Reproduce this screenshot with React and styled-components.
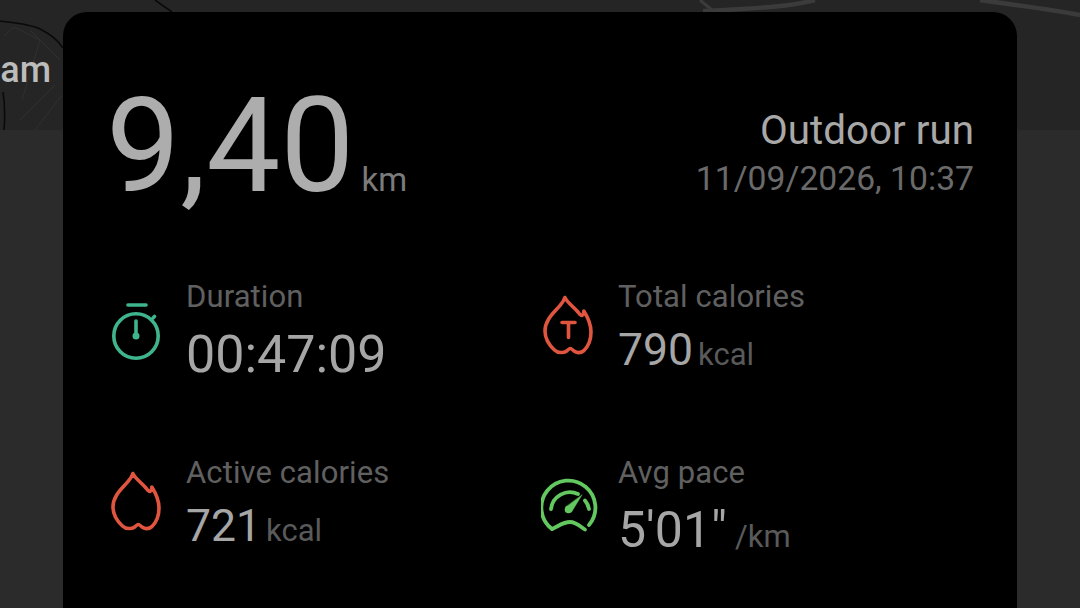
import React from "react";
import styled, { createGlobalStyle } from "styled-components";

const GlobalStyle = createGlobalStyle`
  html, body {
    margin: 0;
    padding: 0;
    background: #2b2b2b;
    overflow: hidden;
  }
  body {
    font-family: Roboto, "Liberation Sans", sans-serif;
  }
`;

const Screen = styled.div`
  position: relative;
  width: 1080px;
  height: 608px;
  overflow: hidden;
  background: #2b2b2b;
`;

const MapStrip = styled.div`
  position: absolute;
  left: 0;
  top: 0;
  width: 1080px;
  height: 130px;
  background: #252525;
`;

const MapLines = styled.svg`
  position: absolute;
  left: 0;
  top: 0;
`;

const MapLabel = styled.span`
  position: absolute;
  right: calc(100% - 51px);
  top: 49px;
  font-size: 36px;
  line-height: 42px;
  font-weight: 500;
  color: #bcbcbc;
`;

const Card = styled.main`
  position: relative;
  box-sizing: border-box;
  width: 954px;
  height: 640px;
  margin: 12px 0 0 63px;
  padding: 68px 43px 0 45px;
  background: #000;
  border-radius: 24px;
`;

const Header = styled.header`
  display: flex;
  justify-content: space-between;
  align-items: flex-start;
`;

const Distance = styled.div`
  display: flex;
  align-items: baseline;
  gap: 7px;
  margin-left: -2px;
  color: #adadad;
`;

const DistanceValue = styled.span`
  font-size: 132px;
  line-height: 132px;
`;

const DistanceUnit = styled.span`
  font-size: 33px;
  color: #7b7b7b;
`;

const Activity = styled.div`
  display: flex;
  flex-direction: column;
  align-items: flex-end;
  padding-top: 28px;
`;

const ActivityName = styled.span`
  font-size: 40.400px;
  line-height: 46px;
  color: #a8a8a8;
`;

const ActivityDate = styled.span`
  font-size: 33.700px;
  line-height: 50px;
  color: #6a6a6a;
`;

const Stats = styled.section`
  display: grid;
  grid-template-columns: 432px 1fr;
  grid-auto-rows: 176px;
  margin-top: 68px;
`;

const Stat = styled.div`
  display: flex;
  align-items: flex-start;
`;

const IconSlot = styled.div`
  flex: none;
  width: 78px;
  margin-top: 15px;
  color: ${(p) => p.$color};

  svg {
    display: block;
    margin-left: 1px;
  }
`;

const StatText = styled.div`
  display: flex;
  flex-direction: column;
`;

const StatLabel = styled.span`
  font-size: 31px;
  line-height: 34px;
  letter-spacing: 0.1px;
  color: #606060;
`;

const StatValue = styled.div`
  display: flex;
  align-items: baseline;
  gap: ${(p) => p.$gap}px;
  margin-top: 12px;
`;

const Figure = styled.span`
  font-size: ${(p) => p.$size}px;
  line-height: ${(p) => (p.$size > 46 ? 57 : 48)}px;
  color: #a6a6a6;
`;

const Unit = styled.span`
  font-size: 31px;
  color: #5a5a5a;
`;

const TimerIcon = () => (
  <svg width="54" height="70" viewBox="0 0 54 70" fill="none" stroke="currentColor" strokeWidth="3.600" strokeLinecap="round">
    <path d="M19 10h18" />
    <circle cx="27" cy="41" r="22.200" />
    <path d="M27 26v12" />
    <circle cx="27" cy="41" r="3.500" fill="currentColor" stroke="none" />
    <path d="M44 23l1.500-1.500" />
  </svg>
);

const FlameIcon = ({ children }) => (
  <svg width="54" height="62" viewBox="0 0 54 62" fill="none" stroke="currentColor" strokeWidth="3.600" strokeLinecap="round" strokeLinejoin="round">
    <path d="M23.900 2.500C26.600 8 32.900 12 37.400 17.500 39.200 20 40.100 21 41 20.500 41.900 20 42.800 18 42.800 16 47.300 23 50 30 50 37 50 45 46.500 52 43 55.500 40 58 36 58 33 56 31.100 54.300 30.200 53.500 29.300 53.500 28.400 53.500 27.500 54.300 25.700 56 23 58 17 58.500 13.500 55 8 50 4 44 4 36 4 24 14 17 19.400 10 21.200 8 23 5 23.900 2.500Z" />
    {children}
  </svg>
);

const SpeedIcon = () => (
  <svg width="62" height="64" viewBox="0 0 62 64" fill="none" stroke="currentColor" strokeWidth="3.800" strokeLinecap="round" strokeLinejoin="round">
    <path d="M11 58A27 27 0 1 1 48 54" />
    <path d="M11 58C18 55 22 51 29 51 35 51 40 56 44 58.500" />
    <path d="M10 38A19 19 0 0 1 37 23" />
    <path d="M44 29.500Q47 33 48 38" />
    <path d="M41 24L30.500 41 25 36Z" fill="currentColor" strokeWidth="0.500" />
    <circle cx="27.500" cy="38.500" r="3.800" fill="currentColor" stroke="none" />
  </svg>
);

const stats = [
  { label: "Duration", value: "00:47:09", size: 52, gap: 8, color: "#3fb58e", icon: <TimerIcon /> },
  {
    label: "Total calories",
    value: "790",
    size: 44.500,
    gap: 5,
    unit: "kcal",
    color: "#e0553f",
    icon: (
      <FlameIcon>
        <path d="M21 27.500h13M27.500 27.500v15" />
      </FlameIcon>
    ),
  },
  { label: "Active calories", value: "721", size: 44.500, gap: 5, unit: "kcal", color: "#e0553f", icon: <FlameIcon /> },
  { label: "Avg pace", value: "5'01\"", size: 50, gap: 8, unit: "/km", color: "#62c85f", icon: <SpeedIcon /> },
];

export default function App() {
  return (
    <Screen>
      <GlobalStyle />
      <MapStrip>
        <MapLines width="1080" height="130" viewBox="0 0 1080 130" fill="none">
          <path d="M4 36L14 27 40 40 22 100M30 30L60 60M20 120L55 85M35 130L62 95" stroke="#303030" strokeWidth="1" />
          <path d="M0 21C15 23 30 24 40 29 50 34 58 40 63 48" stroke="#0a0a0a" strokeWidth="1.600" />
          <path d="M3 92C5 105 5 118 4 130" stroke="#0a0a0a" strokeWidth="1.600" />
          <path d="M155 0L172 12" stroke="#0a0a0a" strokeWidth="1.600" />
          <path d="M703 11C740 9 785 8 815 0M980 0C1015 5 1050 9 1080 15" stroke="#3b3b3b" strokeWidth="4.500" />
          <path d="M700 0L712 10" stroke="#3b3b3b" strokeWidth="3" />
        </MapLines>
        <MapLabel>tam</MapLabel>
      </MapStrip>
      <Card>
        <Header>
          <Distance>
            <DistanceValue>9,40</DistanceValue>
            <DistanceUnit>km</DistanceUnit>
          </Distance>
          <Activity>
            <ActivityName>Outdoor run</ActivityName>
            <ActivityDate>11/09/2026, 10:37</ActivityDate>
          </Activity>
        </Header>
        <Stats>
          {stats.map((s) => (
            <Stat key={s.label}>
              <IconSlot $color={s.color}>{s.icon}</IconSlot>
              <StatText>
                <StatLabel>{s.label}</StatLabel>
                <StatValue $gap={s.gap}>
                  <Figure $size={s.size}>{s.value}</Figure>
                  {s.unit && <Unit>{s.unit}</Unit>}
                </StatValue>
              </StatText>
            </Stat>
          ))}
        </Stats>
      </Card>
    </Screen>
  );
}
